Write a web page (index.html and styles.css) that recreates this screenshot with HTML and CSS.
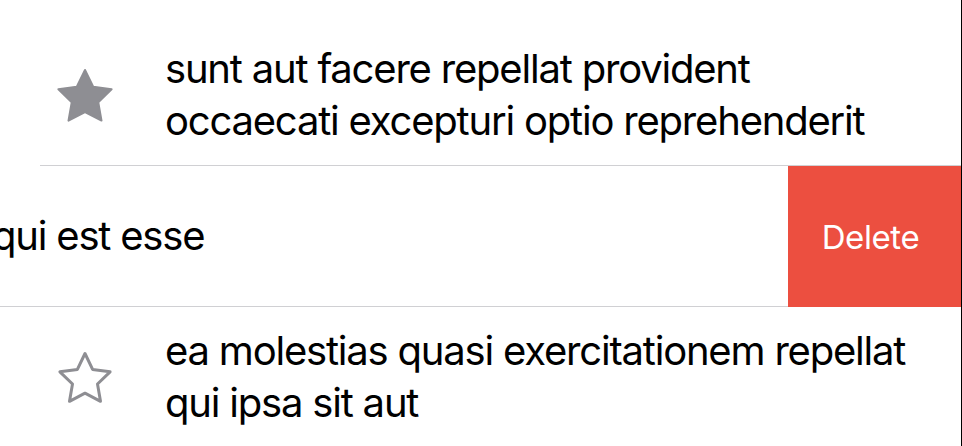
FILE: index.html
```html
<!DOCTYPE html>
<html>
<head>
<meta charset="utf-8">
<link rel="stylesheet" href="styles.css">
</head>
<body>
<div class="screen">
  <div class="list">
    <div class="row">
      <div class="cell">
        <div class="icon">
          <svg width="56" height="54" viewBox="-28 -30 56 54"><polygon class="star-fill" points="0,-28 8.2,-11.3 26.6,-8.7 13.3,4.3 16.5,22.6 0,14 -16.5,22.6 -13.3,4.3 -26.6,-8.7 -8.2,-11.3"/></svg>
        </div>
        <div class="title">sunt aut facere repellat provident occaecati excepturi optio reprehenderit</div>
      </div>
      <div class="sep"></div>
    </div>
    <div class="row swiped">
      <div class="slide">
        <div class="cell">
          <div class="icon"></div>
          <div class="title">qui est esse</div>
        </div>
        <div class="sep"></div>
      </div>
      <div class="delete">Delete</div>
    </div>
    <div class="row">
      <div class="cell">
        <div class="icon">
          <svg width="56" height="54" viewBox="-28 -30 56 54"><polygon class="star-line" points="0,-26.5 7.6,-10.6 25.1,-8.2 12.5,4 15.5,21.3 0,13.2 -15.5,21.3 -12.5,4 -25.1,-8.2 -7.6,-10.6"/></svg>
        </div>
        <div class="title">ea molestias quasi exercitationem repellat qui ipsa sit aut</div>
      </div>
      <div class="sep"></div>
    </div>
  </div>
</div>
</body>
</html>
```
FILE: styles.css
```css
html, body {
  margin: 0;
  padding: 0;
  background: #ffffff;
}
.screen {
  width: 961px;
  height: 446px;
  border-right: 1px solid #000000;
  overflow: hidden;
  font-family: Inter, "Noto Sans", sans-serif;
  color: #000000;
}
.list {
  padding-top: 25px;
}
.row {
  width: 961px;
}
.cell {
  height: 140px;
  display: flex;
  align-items: center;
  padding-left: 57px;
  padding-right: 40px;
  box-sizing: border-box;
}
.icon {
  flex: 0 0 56px;
  height: 54px;
  margin-right: 52px;
}
.icon svg {
  display: block;
}
.star-fill {
  fill: #8e8e93;
  stroke: #8e8e93;
  stroke-width: 2;
  stroke-linejoin: round;
}
.star-line {
  fill: none;
  stroke: #8e8e93;
  stroke-width: 3;
  stroke-linejoin: round;
}
.title {
  flex: 1 1 auto;
  min-width: 0;
  font-size: 40px;
  line-height: 52px;
  letter-spacing: -1.2px;
}
.sep {
  height: 1px;
  margin-left: 40px;
  background: #d0d0d3;
}
.swiped {
  display: flex;
  overflow: hidden;
}
.slide {
  flex: 0 0 961px;
  margin-left: -173px;
}
.delete {
  flex: 0 0 173px;
  box-sizing: border-box;
  padding-right: 8px;
  background: #ec4f40;
  color: #ffffff;
  font-size: 33px;
  letter-spacing: -0.4px;
  display: flex;
  align-items: center;
  justify-content: center;
}
```
